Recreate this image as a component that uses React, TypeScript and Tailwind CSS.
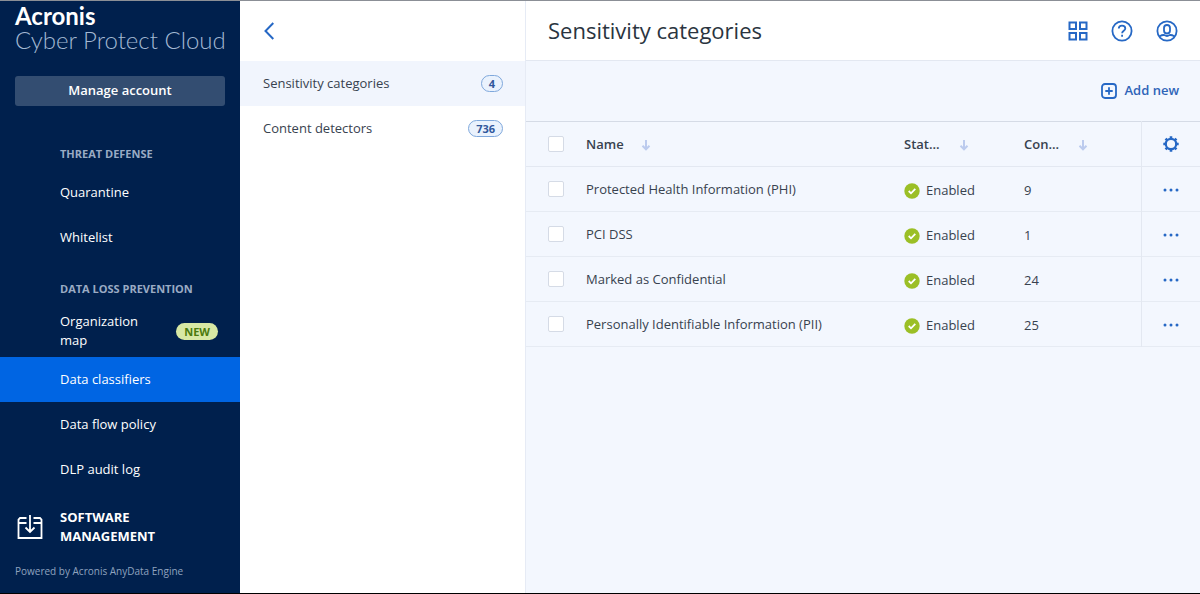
import clsx from "clsx"

type NavItem = { label: string; badge?: string; active?: boolean }

const sections: { title: string; items: NavItem[] }[] = [
  {
    title: "THREAT DEFENSE",
    items: [{ label: "Quarantine" }, { label: "Whitelist" }],
  },
  {
    title: "DATA LOSS PREVENTION",
    items: [
      { label: "Organization map", badge: "NEW" },
      { label: "Data classifiers", active: true },
      { label: "Data flow policy" },
      { label: "DLP audit log" },
    ],
  },
]

const classifiers = [
  { label: "Sensitivity categories", count: 4, active: true },
  { label: "Content detectors", count: 736, active: false },
]

const categories = [
  { name: "Protected Health Information (PHI)", detectors: 9 },
  { name: "PCI DSS", detectors: 1 },
  { name: "Marked as Confidential", detectors: 24 },
  { name: "Personally Identifiable Information (PII)", detectors: 25 },
]

function SortArrow() {
  return (
    <svg width="10" height="12" viewBox="0 0 10 12" fill="none" stroke="#bccbee" strokeWidth="2">
      <path d="M5 1v9M1.500 6.800 5 10.300l3.500-3.500" />
    </svg>
  )
}

function SoftwareIcon() {
  return (
    <svg width="26" height="26" viewBox="0 0 26 26" fill="none" stroke="#fff" strokeWidth="1.800">
      <path d="M9.500 4H3L1.500 5.500V24h23V5.500L23 4h-6.500M1.500 9h8M16.500 9h8M13 1v16.500M8.500 13.500 13 18l4.500-4.500" />
    </svg>
  )
}

function GridIcon() {
  return (
    <svg width="20" height="20" viewBox="0 0 20 20" fill="none" stroke="#2668c5" strokeWidth="2">
      <path d="M1.500 1.500h6.500v6.500H1.500zM12 1.500h6.500v6.500H12zM1.500 12h6.500v6.500H1.500zM12 12h6.500v6.500H12z" />
    </svg>
  )
}

function HelpIcon() {
  return (
    <svg width="22" height="22" viewBox="0 0 22 22" fill="none" stroke="#2668c5" strokeWidth="1.800">
      <circle cx="11" cy="11" r="9.600" />
      <path d="M7.800 8.600C7.800 6.700 9.200 5.600 11 5.600s3.300 1.100 3.300 2.800c0 2.300-3.200 2.400-3.200 4.900" />
      <path d="M11.100 14.800v2" />
    </svg>
  )
}

function UserIcon() {
  return (
    <svg width="22" height="22" viewBox="0 0 22 22" fill="none" stroke="#2668c5" strokeWidth="1.800">
      <circle cx="11" cy="11" r="9.600" />
      <rect x="8" y="5" width="6" height="8.500" rx="3" />
      <path d="M3.800 16.200c1.800-1.100 3.200-1.400 4.700-1.100 1.600 1.200 3.400 1.200 5 0 1.500-.3 2.900 0 4.700 1.100" />
    </svg>
  )
}

function AddIcon() {
  return (
    <svg width="16" height="16" viewBox="0 0 16 16" fill="none" stroke="#2668c5" strokeWidth="1.800">
      <rect x="1" y="1" width="14" height="14" rx="3" />
      <path d="M8 4.300v7.400M4.300 8h7.400" />
    </svg>
  )
}

function GearIcon() {
  return (
    <svg width="16" height="16" viewBox="0 0 16 16" fill="none" stroke="#2668c5">
      <circle cx="8" cy="8" r="5.200" strokeWidth="2.200" />
      <path
        d="M8 .3v2.200M8 13.500v2.200M.3 8h2.200M13.500 8h2.200M2.560 2.560l1.500 1.500M11.940 11.940l1.500 1.500M13.440 2.560l-1.500 1.500M4.060 11.940l-1.500 1.500"
        strokeWidth="2.600"
      />
    </svg>
  )
}

function CheckIcon() {
  return (
    <svg width="16" height="16" viewBox="0 0 16 16" fill="none">
      <circle cx="8" cy="8" r="7.700" fill="#9bbf26" />
      <path d="m4.700 8 2.300 2.300 4.300-4.400" stroke="#fff" strokeWidth="1.800" />
    </svg>
  )
}

function Checkbox({ label }: { label: string }) {
  return (
    <input
      type="checkbox"
      aria-label={label}
      className="block size-4 appearance-none rounded-xs border border-[#d5dbe6] bg-white checked:bg-[#2668c5]"
    />
  )
}

function Sidebar() {
  return (
    <aside className="flex w-60 shrink-0 flex-col bg-[#00204d] text-white">
      <div className="px-[15px] pt-px font-['Lato',sans-serif]">
        <div className="text-2xl leading-7 font-bold">Acronis</div>
        <div className="text-2xl leading-5 font-light whitespace-nowrap text-[#a3b8d3]">Cyber Protect Cloud</div>
      </div>
      <button className="mx-[15px] mt-[26px] h-[30px] rounded-[3px] bg-[#334d71] text-[13px] font-semibold">
        Manage account
      </button>
      <nav className="mt-[19px] text-[13px] font-medium">
        {sections.map((section) => (
          <section key={section.title}>
            <h2 className="h-[45px] pt-5 pl-15 text-[11px] leading-[18px] font-bold text-[#9aabc4]">
              {section.title}
            </h2>
            {section.items.map((item) => (
              <a
                key={item.label}
                href="#"
                className={clsx(
                  "flex items-center justify-between pr-[22px] pl-15 leading-[19px]",
                  item.badge ? "h-[52px]" : "h-[45px]",
                  item.active && "bg-[#0065e3]",
                )}
              >
                <span className={clsx(item.badge && "w-24")}>{item.label}</span>
                {item.badge && (
                  <span className="rounded-full bg-[#d7e8a4] px-2 text-[11px] leading-[17px] font-bold text-[#4b7a0c]">
                    {item.badge}
                  </span>
                )}
              </a>
            ))}
          </section>
        ))}
        <a href="#" className="flex h-[70px] items-center gap-[17px] pl-[17px] leading-[19px] font-bold">
          <SoftwareIcon />
          <span className="w-28">SOFTWARE MANAGEMENT</span>
        </a>
      </nav>
      <p className="pl-[15px] text-[10px] leading-[18px] text-[#8fa3bf]">Powered by Acronis AnyData Engine</p>
    </aside>
  )
}

function ClassifierPanel() {
  return (
    <div className="w-[286px] shrink-0 border-r border-[#e6ebf5] bg-white">
      <div className="flex h-15 items-center pl-6">
        <button aria-label="Back">
          <svg width="10" height="18" viewBox="0 0 10 18" fill="none" stroke="#2668c5" strokeWidth="2">
            <path d="M9.300 1 1.500 9l7.800 8" />
          </svg>
        </button>
      </div>
      {classifiers.map((item) => (
        <a
          key={item.label}
          href="#"
          className={clsx("flex h-[45px] items-center justify-between pr-[22px] pl-[23px]", item.active && "bg-[#f1f5fd]")}
        >
          {item.label}
          <span className="rounded-full border border-[#7fa8dc] bg-[#eaf2fd] px-[7px] text-[11px] leading-[15px] font-bold text-[#31579c]">
            {item.count}
          </span>
        </a>
      ))}
    </div>
  )
}

function CategoryTable() {
  return (
    <table className="w-full table-fixed text-left">
      <thead>
        <tr className="h-[45px] border-y border-t-[#d5dbe6] border-b-[#e3e8f1]">
          <th className="w-15 pl-[22px]">
            <Checkbox label="Select all" />
          </th>
          <th className="pt-0.5 font-semibold">
            <button className="flex items-center gap-[17px]">
              Name <SortArrow />
            </button>
          </th>
          <th className="w-30 pt-0.5 font-semibold">
            <button className="flex items-center gap-[19px]">
              Stat... <SortArrow />
            </button>
          </th>
          <th className="w-[117px] pt-0.5 font-semibold">
            <button className="flex items-center gap-[19px]">
              Con... <SortArrow />
            </button>
          </th>
          <th className="w-[59px] border-l border-[#e3e8f1]">
            <button aria-label="Configure columns" className="mx-auto block">
              <GearIcon />
            </button>
          </th>
        </tr>
      </thead>
      <tbody>
        {categories.map((category) => (
          <tr key={category.name} className="h-[45px] border-b border-[#e6ebf3]">
            <td className="pl-[22px]">
              <Checkbox label={category.name} />
            </td>
            <td className="pt-0.5">{category.name}</td>
            <td className="pt-[3px]">
              <span className="flex items-center gap-1.5">
                <CheckIcon /> Enabled
              </span>
            </td>
            <td className="pt-[3px]">{category.detectors}</td>
            <td className="border-l border-[#e3e8f1] pt-0.5">
              <button aria-label="More actions" className="mx-auto block">
                <svg width="16" height="4" viewBox="0 0 16 4" fill="#2668c5">
                  <circle cx="2" cy="2" r="1.500" />
                  <circle cx="8" cy="2" r="1.500" />
                  <circle cx="14" cy="2" r="1.500" />
                </svg>
              </button>
            </td>
          </tr>
        ))}
      </tbody>
    </table>
  )
}

export default function App() {
  return (
    <div className="flex min-h-screen border-t border-b border-t-[#8b8f96] border-b-black bg-[#f3f7fe] font-['Open_Sans',sans-serif] text-[13px] text-[#38424f]">
      <Sidebar />
      <ClassifierPanel />
      <main className="min-w-0 flex-1">
        <header className="flex h-15 items-center justify-between border-b border-[#e3e8f1] bg-white pr-[22px] pl-[22px]">
          <h1 className="text-[22px] text-[#2a3440]">Sensitivity categories</h1>
          <div className="flex items-center gap-[23px]">
            <button aria-label="Applications">
              <GridIcon />
            </button>
            <button aria-label="Help">
              <HelpIcon />
            </button>
            <button aria-label="Account">
              <UserIcon />
            </button>
          </div>
        </header>
        <div className="flex h-15 items-center justify-end pr-[21px]">
          <button className="flex items-center gap-[7px] font-semibold text-[#2e64b8]">
            <AddIcon /> Add new
          </button>
        </div>
        <CategoryTable />
      </main>
    </div>
  )
}
